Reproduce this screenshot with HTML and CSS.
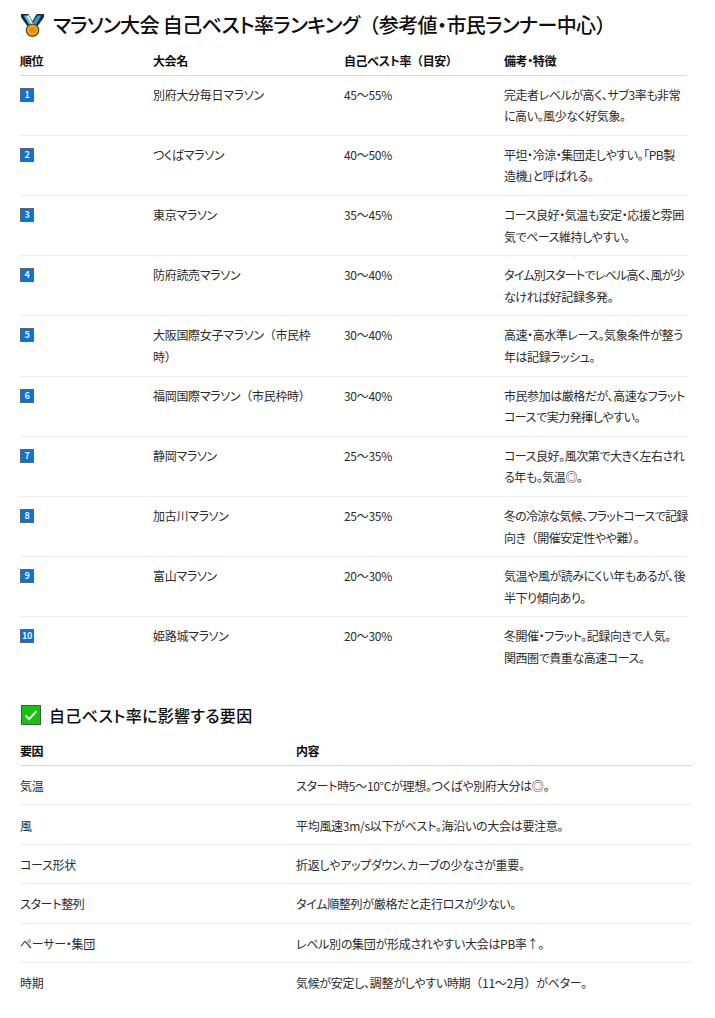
FILE: index.html
```html
<!DOCTYPE html>
<html lang="ja">
<head>
<meta charset="utf-8">
<title>マラソン大会 自己ベスト率ランキング</title>
<link rel="stylesheet" href="styles.css">
</head>
<body>
<main class="page">
<h2 class="title">
<svg class="emoji" viewBox="0 0 24 24" aria-hidden="true"><path d="M1 1h7l4 7 4-7h7v3l-7 10H8L1 4z" fill="#1c2a36"/><path d="M3.500 2.500h3.700L12 10l-2.200 3z" fill="#4fc3ee"/><path d="M20.500 2.500h-3.700L12 10l2.200 3z" fill="#2a9fd8"/><path d="M6.500 2.500h2L13 11l-1.500 1.500z" fill="#e8f8ff"/><circle cx="12" cy="16.500" r="6.500" fill="#5a4a20"/><circle cx="12" cy="16.500" r="5.300" fill="#f2a81d"/><circle cx="12" cy="16.500" r="3" fill="#e08e0b"/></svg>
<span>マラソン大会 自己ベスト率ランキング<span class="fw">（</span>参考値・市民ランナー中心<span class="fw">）</span></span>
</h2>
<table class="grid grid-rank">
<colgroup><col class="c-rank"><col class="c-name"><col class="c-rate"><col class="c-note"></colgroup>
<thead><tr><th>順位</th><th>大会名</th><th>自己ベスト率<span class="fw">（</span>目安<span class="fw">）</span></th><th>備考・特徴</th></tr></thead>
<tbody>
<tr><td><span class="key">1</span></td><td>別府大分毎日マラソン</td><td>45〜55%</td><td>完走者レベルが高く、サブ3率も非常<br>に高い。風少なく好気象。</td></tr>
<tr><td><span class="key">2</span></td><td>つくばマラソン</td><td>40〜50%</td><td>平坦・冷涼・集団走しやすい。「PB製<br>造機」と呼ばれる。</td></tr>
<tr><td><span class="key">3</span></td><td>東京マラソン</td><td>35〜45%</td><td>コース良好・気温も安定・応援と雰囲<br>気でペース維持しやすい。</td></tr>
<tr><td><span class="key">4</span></td><td>防府読売マラソン</td><td>30〜40%</td><td><span class="tight">タイム別スタートでレベル高く、風が少</span><br>なければ好記録多発。</td></tr>
<tr><td><span class="key">5</span></td><td>大阪国際女子マラソン<span class="fw">（</span>市民枠<br>時<span class="fw">）</span></td><td>30〜40%</td><td>高速・高水準レース。気象条件が整う<br>年は記録ラッシュ。</td></tr>
<tr><td><span class="key">6</span></td><td>福岡国際マラソン<span class="fw">（</span>市民枠時<span class="fw">）</span></td><td>30〜40%</td><td>市民参加は厳格だが、高速なフラット<br>コースで実力発揮しやすい。</td></tr>
<tr><td><span class="key">7</span></td><td>静岡マラソン</td><td>25〜35%</td><td>コース良好。風次第で大きく左右され<br>る年も。気温◎。</td></tr>
<tr><td><span class="key">8</span></td><td>加古川マラソン</td><td>25〜35%</td><td><span class="tight">冬の冷涼な気候、フラットコースで記録</span><br>向き<span class="fw">（</span>開催安定性やや難<span class="fw">）</span>。</td></tr>
<tr><td><span class="key">9</span></td><td>富山マラソン</td><td>20〜30%</td><td>気温や風が読みにくい年もあるが、後<br>半下り傾向あり。</td></tr>
<tr><td><span class="key">10</span></td><td>姫路城マラソン</td><td>20〜30%</td><td>冬開催・フラット。記録向きで人気。<br>関西圏で貴重な高速コース。</td></tr>
</tbody>
</table>
<h3 class="subtitle">
<svg class="emoji" viewBox="0 0 20 20" aria-hidden="true"><rect x="0.500" y="0.500" width="19" height="19" fill="#15c30f" stroke="#4a5a48"/><path d="M4.500 10.500l3.600 3.600 7.400-8" fill="none" stroke="#fff" stroke-width="2"/></svg>
<span>自己ベスト率に影響する要因</span>
</h3>
<table class="grid grid-factor">
<colgroup><col class="c-factor"><col></colgroup>
<thead><tr><th>要因</th><th>内容</th></tr></thead>
<tbody>
<tr><td>気温</td><td>スタート時5〜10°Cが理想。つくばや別府大分は◎。</td></tr>
<tr><td>風</td><td>平均風速3m/s以下がベスト。海沿いの大会は要注意。</td></tr>
<tr><td>コース形状</td><td>折返しやアップダウン、カーブの少なさが重要。</td></tr>
<tr><td>スタート整列</td><td>タイム順整列が厳格だと走行ロスが少ない。</td></tr>
<tr><td>ペーサー・集団</td><td>レベル別の集団が形成されやすい大会はPB率↑。</td></tr>
<tr><td>時期</td><td>気候が安定し、調整がしやすい時期<span class="fw">（</span>11〜2月<span class="fw">）</span>がベター。</td></tr>
</tbody>
</table>
</main>
</body>
</html>
```
FILE: styles.css
```css
html, body { margin: 0; background: #fff; }
body {
  font-family: "Noto Sans CJK JP", "Noto Sans", sans-serif;
  font-feature-settings: "palt";
  font-size: 12px;
  line-height: 1.8;
  letter-spacing: -0.3px;
  color: #2b2b2b;
}
.fw { font-feature-settings: normal; }
.tight { letter-spacing: -0.75px; }
.page { padding: 11px 0 0 20px; }
.title, .subtitle {
  display: flex;
  align-items: center;
  margin: 0;
  color: #0d0d0d;
  font-weight: 500;
  font-size: 20px;
  line-height: 28px;
  letter-spacing: -0.6px;
}
.title { gap: 8px; }
.subtitle { font-size: 16px; letter-spacing: 0.3px; gap: 8px; margin: 26px 0 8px 1px; line-height: 26px; }
.title .emoji { width: 25px; height: 25px; }
.subtitle .emoji { width: 20px; height: 20px; }
.grid { border-collapse: collapse; table-layout: fixed; }
.grid-rank { width: 667px; margin-top: 7px; }
.grid-factor { width: 672px; }
.c-rank { width: 133px; }
.c-name { width: 191px; }
.c-rate { width: 160px; }
.c-factor { width: 276px; }
th {
  text-align: left;
  font-weight: 700;
  color: #0d0d0d;
  padding: 4px 0 3px;
  border-bottom: 1px solid #d9d9d9;
  letter-spacing: -0.4px;
}
td {
  padding: 8px 0;
  vertical-align: top;
  white-space: nowrap;
  border-bottom: 1px solid #ececec;
}
tr:last-child td { border-bottom: 0; }
.grid-rank td:nth-child(4) { letter-spacing: -0.45px; }
.grid-factor td { padding: 9.200px 0 7.600px; }
.key {
  display: block;
  width: 14px;
  height: 14px;
  margin-top: 4px;
  background: #0b72d8;
  border: 1px solid #5a6570;
  box-sizing: border-box;
  color: #e6f3ff;
  font-size: 9px;
  line-height: 12px;
  font-weight: 700;
  text-align: center;
  letter-spacing: -0.4px;
}
```
